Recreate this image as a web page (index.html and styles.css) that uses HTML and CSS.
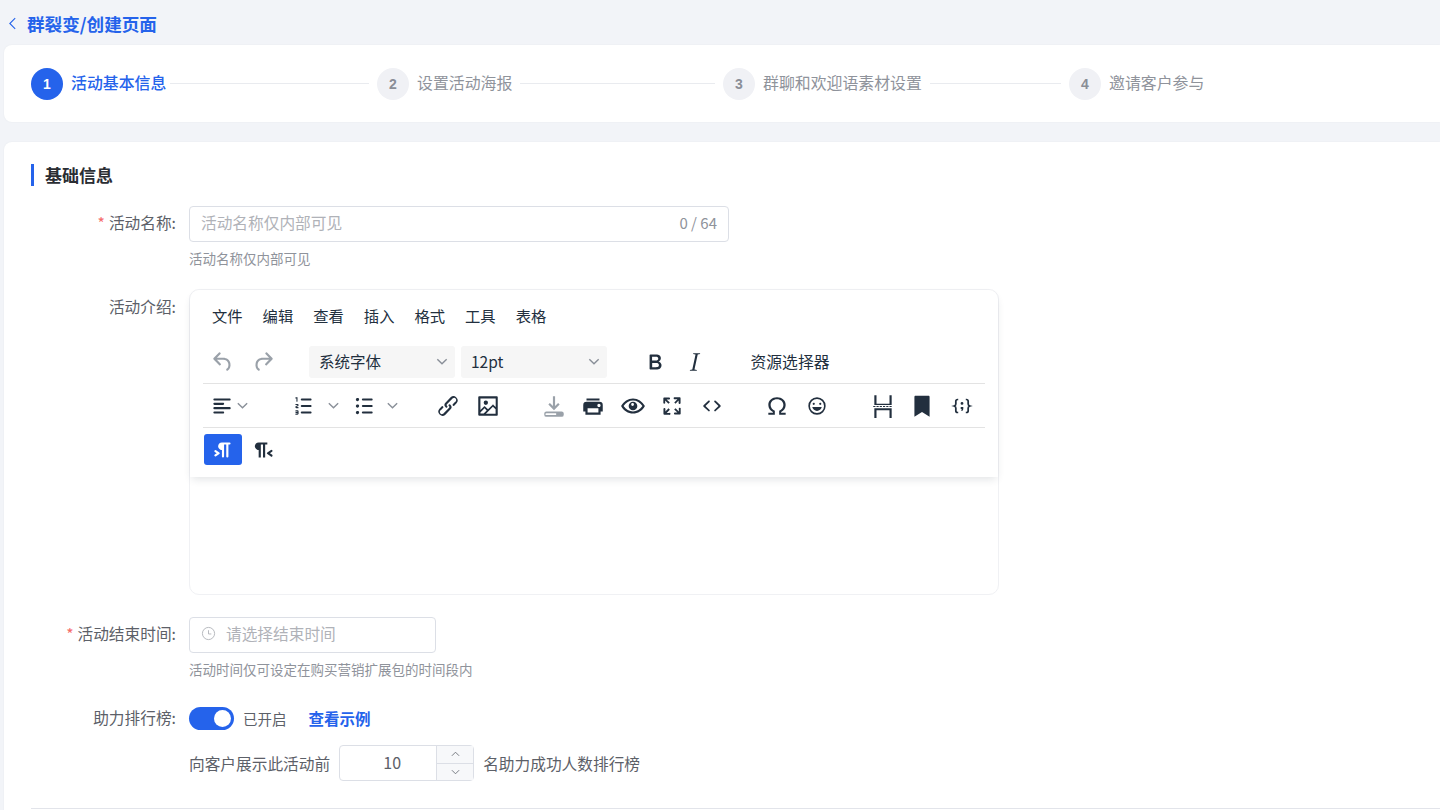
FILE: index.html
```html
<!DOCTYPE html>
<html lang="zh-CN">
<head>
    <meta charset="UTF-8">
    <meta name="viewport" content="width=device-width, initial-scale=1.0">
    <title>群裂变/创建页面</title>
    <link rel="stylesheet" href="styles.css">
</head>
<body>
    <!-- 页面标题 -->
    <div class="page-head">
        <svg class="back-icon" viewBox="0 0 10 16"><path d="M8 2 2 8l6 6"/></svg>
        <span class="page-title">群裂变/创建页面</span>
    </div>

    <!-- 步骤条 -->
    <div class="card steps">
        <div class="step active"><span class="step-num">1</span><span class="step-text">活动基本信息</span><span class="step-line"></span></div>
        <div class="step"><span class="step-num">2</span><span class="step-text">设置活动海报</span><span class="step-line"></span></div>
        <div class="step"><span class="step-num">3</span><span class="step-text">群聊和欢迎语素材设置</span><span class="step-line"></span></div>
        <div class="step"><span class="step-num">4</span><span class="step-text">邀请客户参与</span></div>
    </div>

    <div class="card form-card">
        <h2 class="section-title">基础信息</h2>

        <div class="form-row">
            <label class="form-label"><i>*</i>活动名称:</label>
            <div class="form-body">
                <div class="input name-input"><span class="placeholder">活动名称仅内部可见</span><span class="counter">0 / 64</span></div>
                <p class="hint">活动名称仅内部可见</p>
            </div>
        </div>

        <div class="form-row intro-row">
            <label class="form-label intro-label">活动介绍:</label>
            <div class="editor">
                <div class="editor-head">
                    <div class="menubar">
                        <span>文件</span><span>编辑</span><span>查看</span><span>插入</span><span>格式</span><span>工具</span><span>表格</span>
                    </div>
                    <div class="toolbar tb-first">
                        <div class="tb-group">
                            <span class="tb-btn disabled"><svg viewBox="0 0 24 24"><path d="M6.4 8H12c3.7 0 6.2 2 6.8 5.1.6 2.7-.4 5.6-2.3 6.8a1 1 0 0 1-1-1.8c1.1-.6 1.8-2.7 1.4-4.6-.5-2.1-2.1-3.5-4.9-3.5H6.4l3.3 3.3a1 1 0 1 1-1.4 1.4l-5-5a1 1 0 0 1 0-1.4l5-5a1 1 0 0 1 1.4 1.4L6.4 8Z"/></svg></span>
                            <span class="tb-btn disabled redo"><svg viewBox="0 0 24 24"><path d="M17.6 8H12c-3.7 0-6.2 2-6.8 5.1-.6 2.7.4 5.6 2.3 6.8a1 1 0 0 0 1-1.8c-1.1-.6-1.8-2.7-1.4-4.6.5-2.1 2.1-3.5 4.9-3.5h5.6l-3.3 3.3a1 1 0 1 0 1.4 1.4l5-5a1 1 0 0 0 0-1.4l-5-5a1 1 0 0 0-1.4 1.4L17.6 8Z"/></svg></span>
                        </div>
                        <div class="tb-select font-select"><span>系统字体</span><svg class="chev" viewBox="0 0 10 6"><path d="m1 1 4 4 4-4"/></svg></div>
                        <div class="tb-select size-select"><span>12pt</span><svg class="chev" viewBox="0 0 10 6"><path d="m1 1 4 4 4-4"/></svg></div>
                        <div class="tb-group bold-group">
                            <span class="tb-btn"><svg viewBox="0 0 24 24"><path d="M7.8 19c-.3 0-.5 0-.6-.2l-.2-.5V5.7c0-.2 0-.4.2-.5l.6-.2h5c1.5 0 2.7.3 3.5 1 .7.6 1.1 1.4 1.1 2.5a3 3 0 0 1-.6 1.9c-.4.6-1 1-1.6 1.2.4.1.9.3 1.3.6s.8.7 1 1.2c.4.4.5 1 .5 1.6 0 1.3-.4 2.3-1.3 3-.8.7-2.1 1-3.8 1H7.8Zm5-8.3c.6 0 1.2-.1 1.6-.5.4-.3.6-.7.6-1.3 0-1.1-.8-1.7-2.3-1.7H9.3v3.5h3.4Zm.5 6c.7 0 1.3-.1 1.7-.4.4-.4.6-.9.6-1.5s-.2-1-.7-1.4c-.4-.3-1-.4-2-.4H9.4v3.8h4Z"/></svg></span>
                            <span class="tb-btn"><svg viewBox="0 0 24 24"><path d="M16.7 4.7 14.5 5l-3 14 2.2.3V20H7.3v-.7l2.2-.3 3-14-2.2-.3V4h6.400z"/></svg></span>
                        </div>
                        <span class="tb-text">资源选择器</span>
                    </div>
                    <div class="toolbar tb-second">
                        <div class="tb-split align-split">
                            <span class="tb-btn"><svg viewBox="0 0 24 24"><path d="M5 5h14c.6 0 1 .4 1 1s-.4 1-1 1H5a1 1 0 1 1 0-2Zm0 4h8c.6 0 1 .4 1 1s-.4 1-1 1H5a1 1 0 1 1 0-2Zm0 8h8c.6 0 1 .4 1 1s-.4 1-1 1H5a1 1 0 0 1 0-2Zm0-4h14c.6 0 1 .4 1 1s-.4 1-1 1H5a1 1 0 0 1 0-2Z"/></svg></span>
                            <svg class="chev" viewBox="0 0 10 6"><path d="m1 1 4 4 4-4"/></svg>
                        </div>
                        <div class="tb-split ol-split">
                            <span class="tb-btn"><svg viewBox="0 0 24 24"><path d="M10 17h8c.6 0 1 .4 1 1s-.4 1-1 1h-8a1 1 0 0 1 0-2Zm0-6h8c.6 0 1 .4 1 1s-.4 1-1 1h-8a1 1 0 0 1 0-2Zm0-6h8c.6 0 1 .4 1 1s-.4 1-1 1h-8a1 1 0 1 1 0-2ZM6 4v3.5c0 .3-.2.5-.5.5a.5.5 0 0 1-.5-.5V5h-.5a.5.5 0 0 1 0-1H6Zm-1 8.8.2.2h1.3c.3 0 .5.2.5.5s-.2.5-.5.5H4.900a1 1 0 0 1-.9-1V13c0-.4.3-.8.6-1l1.2-.4.2-.3a.2.2 0 0 0-.2-.2H4.500a.5.5 0 0 1-.5-.5c0-.3.2-.5.5-.5h1.6c.5 0 .9.4.9 1v.1c0 .4-.3.8-.6 1l-1.2.4-.2.3ZM7 17v2c0 .6-.4 1-1 1H4.500a.5.5 0 0 1 0-1h1.2c.2 0 .3-.1.3-.3 0-.2-.1-.3-.3-.3H4.400a.4.4 0 1 1 0-.8h1.3c.2 0 .3-.1.3-.3 0-.2-.1-.3-.3-.3H4.500a.5.5 0 1 1 0-1H6c.6 0 1 .4 1 1Z"/></svg></span>
                            <svg class="chev" viewBox="0 0 10 6"><path d="m1 1 4 4 4-4"/></svg>
                        </div>
                        <div class="tb-split ul-split">
                            <span class="tb-btn"><svg viewBox="0 0 24 24"><path d="M11 5h8c.6 0 1 .4 1 1s-.4 1-1 1h-8a1 1 0 0 1 0-2Zm0 6h8c.6 0 1 .4 1 1s-.4 1-1 1h-8a1 1 0 0 1 0-2Zm0 6h8c.6 0 1 .4 1 1s-.4 1-1 1h-8a1 1 0 0 1 0-2ZM4.500 6c0-.4.1-.8.4-1 .3-.4.7-.5 1.1-.5.4 0 .8.1 1 .4.4.3.5.7.5 1.1 0 .4-.1.8-.4 1-.3.4-.7.5-1.1.5-.4 0-.8-.1-1-.4-.4-.3-.5-.7-.5-1.100Zm0 6c0-.4.1-.8.4-1 .3-.4.7-.5 1.1-.5.4 0 .8.1 1 .4.4.3.5.7.5 1.1 0 .4-.1.8-.4 1-.3.4-.7.5-1.1.5-.4 0-.8-.1-1-.4-.4-.3-.5-.7-.5-1.100Zm0 6c0-.4.1-.8.4-1 .3-.4.7-.5 1.1-.5.4 0 .8.1 1 .4.4.3.5.7.5 1.1 0 .4-.1.8-.4 1-.3.4-.7.5-1.1.5-.4 0-.8-.1-1-.4-.4-.3-.5-.7-.5-1.100Z"/></svg></span>
                            <svg class="chev" viewBox="0 0 10 6"><path d="m1 1 4 4 4-4"/></svg>
                        </div>
                        <div class="tb-group link-group">
                            <span class="tb-btn"><svg viewBox="0 0 24 24"><path d="M6.2 12.3a1 1 0 0 1 1.4 1.4l-2 2a2 2 0 1 0 2.6 2.8l4.8-4.8a1 1 0 0 0 0-1.4 1 1 0 1 1 1.4-1.3 2.9 2.9 0 0 1 0 4L9.6 20a3.9 3.9 0 0 1-5.5-5.5l2-2Zm11.600-.6a1 1 0 0 1-1.400-1.400l2-2a2 2 0 1 0-2.600-2.800L11 10.300a1 1 0 0 0 0 1.400A1 1 0 1 1 9.600 13a2.900 2.900 0 0 1 0-4L14.400 4a3.900 3.900 0 0 1 5.500 5.500l-2 2Z"/></svg></span>
                            <span class="tb-btn"><svg viewBox="0 0 24 24"><path d="m5 15.7 3.3-3.2c.3-.3.7-.3 1 0L12 15l4.100-4c.3-.4.8-.4 1 0l2 1.900V5H5v10.700ZM5 18v1h3l2.800-2.900-2-2L5 17.900Zm14-3-2.500-2.400-6.400 6.500H19v-4ZM4 3h16c.6 0 1 .4 1 1v16c0 .6-.4 1-1 1H4a1 1 0 0 1-1-1V4c0-.6.4-1 1-1Zm6 8a2 2 0 1 0 0-4 2 2 0 0 0 0 4Z"/></svg></span>
                        </div>
                        <div class="tb-group tools-group">
                            <span class="tb-btn disabled"><svg viewBox="0 0 24 24"><path d="M11 3h2v9l2.800-2.800 1.400 1.400L12 16l-5.200-5.400 1.400-1.400L11 12V3Z"/><path fill-rule="evenodd" d="M5 17h14a2 2 0 0 1 2 2v1a2 2 0 0 1-2 2H5a2 2 0 0 1-2-2v-1a2 2 0 0 1 2-2Zm0 1.600a.8.8 0 0 0 0 1.800h9v-1.800H5Z"/></svg></span>
                            <span class="tb-btn"><svg viewBox="0 0 24 24"><path d="M18 8H6a3 3 0 0 0-3 3v6h2v3h14v-3h2v-6a3 3 0 0 0-3-3Zm-1 10H7v-4h10v4Zm.5-5c-.8 0-1.500-.7-1.500-1.500s.7-1.500 1.500-1.500 1.500.7 1.500 1.500-.7 1.500-1.500 1.500Zm.5-8H6v2h12V5Z"/></svg></span>
                            <span class="tb-btn"><svg viewBox="0 0 24 24"><path fill-rule="evenodd" d="M12 5c4.500 0 8.700 2.700 11 7-2.300 4.300-6.500 7-11 7S3.300 16.300 1 12c2.300-4.300 6.500-7 11-7Zm0 2c-3.400 0-6.600 1.900-8.700 5 2.100 3.100 5.300 5 8.700 5s6.600-1.900 8.700-5c-2.100-3.100-5.300-5-8.700-5Zm0 1a4 4 0 1 1 0 8 4 4 0 0 1 0-8Zm-.4 1.300a1.300 1.300 0 1 0 0 2.600 1.300 1.300 0 0 0 0-2.600Z"/></svg></span>
                            <span class="tb-btn"><svg viewBox="0 0 24 24"><path d="m15.300 10-1.200-1.300 2.900-3h-2.300a.9.9 0 1 1 0-1.700H19c.5 0 .9.4.9.9v4.400a.9.9 0 1 1-1.800 0V7l-2.900 3Zm0 4 3 3v-2.300a.9.900 0 1 1 1.700 0V19c0 .5-.4.9-.9.9h-4.400a.9.900 0 1 1 0-1.800H17l-3-2.900 1.300-1.200ZM10 15.400l-2.900 3h2.300a.9.900 0 1 1 0 1.700H5a.9.900 0 0 1-.9-.9v-4.400a.9.900 0 1 1 1.800 0V17l2.900-3 1.200 1.400ZM8.700 10l-3-3v2.300a.9.900 0 0 1-1.700 0V5c0-.5.4-.9.9-.9h4.400a.9.900 0 0 1 0 1.800H7l3 2.900-1.300 1.200Z"/></svg></span>
                            <span class="tb-btn"><svg viewBox="0 0 24 24"><path d="M9.800 15.700c.3.300.3.800 0 1-.3.400-.9.400-1.200 0l-4.400-4.100a.8.8 0 0 1 0-1.200l4.400-4.200c.3-.3.900-.3 1.200 0 .3.300.3.800 0 1.100L6 12l3.800 3.700ZM14.200 15.700c-.3.300-.3.800 0 1 .4.400.9.400 1.200 0l4.400-4.100c.3-.3.300-.9 0-1.200l-4.400-4.200a.8.8 0 0 0-1.200 0c-.3.300-.3.800 0 1.100L18 12l-3.800 3.700Z"/></svg></span>
                        </div>
                        <div class="tb-group char-group">
                            <span class="tb-btn"><svg viewBox="0 0 24 24"><path d="M4 20v-1.800h4.200v-.7C5.700 16.300 4 13.800 4 11c0-4.100 3.400-7 8-7s8 2.900 8 7c0 2.800-1.700 5.300-4.200 6.500v.7H20V20h-6v-3.700c2.300-.8 3.900-2.900 3.900-5.300 0-3-2.500-5.200-5.900-5.200S6.100 8 6.100 11c0 2.400 1.600 4.500 3.900 5.300V20H4Z"/></svg></span>
                            <span class="tb-btn"><svg viewBox="0 0 24 24"><path d="M9 11c.6 0 1-.4 1-1s-.4-1-1-1a1 1 0 0 0-1 1c0 .6.4 1 1 1Zm6 0c.6 0 1-.4 1-1s-.4-1-1-1a1 1 0 0 0-1 1c0 .6.4 1 1 1Zm-3 5.500c2.100 0 4-1.500 4.400-3.500H7.600c.5 2 2.300 3.500 4.400 3.500ZM12 4a8 8 0 1 0 0 16 8 8 0 0 0 0-16Zm0 14.500a6.500 6.500 0 1 1 0-13 6.500 6.500 0 0 1 0 13Z"/></svg></span>
                        </div>
                        <div class="tb-group break-group">
                            <span class="tb-btn"><svg viewBox="0 0 24 24"><path d="M4 2h2v8h12V2h2v9H4V2Zm0 21h2v-7h12v7h2v-9H4v9Z"/><path d="M3 12h2v1H3zm3 0h2v1H6zm3 0h2v1H9zm3 0h2v1h-2zm3 0h2v1h-2zm3 0h2v1h-2z"/></svg></span>
                            <span class="tb-btn"><svg viewBox="0 0 24 24"><path d="M5 3.500c0-.6.4-1 1-1h12c.6 0 1 .4 1 1V22l-7-4.500L5 22V3.500Z"/></svg></span>
                            <span class="tb-btn"><svg viewBox="0 0 24 24"><path class="brace" d="M8.500 6H8c-1 0-1.700.6-1.700 1.700v2.400c0 1-.5 1.600-1.500 1.900 1 .3 1.500.9 1.500 1.900v2.400c0 1.100.7 1.700 1.700 1.700h.5M15.500 6h.5c1 0 1.700.6 1.700 1.700v2.400c0 1 .5 1.600 1.500 1.900-1 .3-1.500.9-1.500 1.900v2.400c0 1.100-.7 1.700-1.700 1.700h-.5"/><path d="M12 8.300a1.300 1.300 0 1 1 0 2.600 1.300 1.300 0 0 1 0-2.600Zm-1.200 4.700h2.400v1.500c0 1.100-.5 1.800-1.500 2.100l-.5-.9c.4-.2.600-.5.700-.9h-1.100V13Z"/></svg></span>
                        </div>
                    </div>
                    <div class="toolbar tb-third">
                        <span class="tb-btn on"><svg viewBox="0 0 24 24"><path d="M11 5h7a1 1 0 0 1 0 2h-1v11a1 1 0 0 1-2 0V7h-2v11a1 1 0 0 1-2 0v-6c-.5 0-1 0-1.400-.3A3.400 3.400 0 0 1 7.800 10a3.300 3.300 0 0 1 0-2.800 3.400 3.400 0 0 1 1.800-1.800L11 5ZM4.400 16.200 6.200 15l-1.800-1.200a1 1 0 0 1 1.200-1.600l3 2a1 1 0 0 1 0 1.600l-3 2a1 1 0 1 1-1.200-1.600Z"/></svg></span>
                        <span class="tb-btn rtl"><svg viewBox="0 0 24 24"><path d="M8 5h8v2h-2v12h-2V7h-2v12H8v-7c-.5 0-1 0-1.400-.3A3.400 3.400 0 0 1 4.800 10a3.300 3.300 0 0 1 0-2.800 3.400 3.400 0 0 1 1.800-1.800L8 5Zm12 11.200a1 1 0 1 1-1 1.600l-3-2a1 1 0 0 1 0-1.600l3-2a1 1 0 1 1 1 1.600L18.400 15l1.800 1.200Z"/></svg></span>
                    </div>
                </div>
            </div>
        </div>

        <div class="form-row end-row">
            <label class="form-label"><i>*</i>活动结束时间:</label>
            <div class="form-body">
                <div class="input time-input">
                    <svg class="clock" viewBox="0 0 16 16"><circle cx="8" cy="8" r="6.500"/><path d="M8 4.500V8.500h3"/></svg>
                    <span class="placeholder">请选择结束时间</span>
                </div>
                <p class="hint">活动时间仅可设定在购买营销扩展包的时间段内</p>
            </div>
        </div>

        <div class="form-row rank-row">
            <label class="form-label">助力排行榜:</label>
            <div class="form-body">
                <div class="switch-line">
                    <span class="switch"><span class="switch-dot"></span></span>
                    <span class="switch-text">已开启</span>
                    <a class="link">查看示例</a>
                </div>
                <div class="number-line">
                    <span>向客户展示此活动前</span>
                    <div class="number-input">
                        <span class="number-value">10</span>
                        <div class="number-arrows">
                            <span><svg viewBox="0 0 10 6"><path d="m1 5 4-4 4 4"/></svg></span>
                            <span><svg viewBox="0 0 10 6"><path d="m1 1 4 4 4-4"/></svg></span>
                        </div>
                    </div>
                    <span>名助力成功人数排行榜</span>
                </div>
            </div>
        </div>

        <div class="divider"></div>
    </div>
</body>
</html>
```

FILE: styles.css
```css
* {
    box-sizing: border-box;
}
html, body {
    height: 810px;
    overflow: hidden;
}
body {
    margin: 0;
    padding-left: 4px;
    background-color: #f2f4f8;
    font-family: "Noto Sans CJK SC", "Noto Sans", sans-serif;
    font-size: 15.7px;
    color: #5c6068;
}
.page-head {
    height: 45px;
    margin-left: -4px;
    padding: 2px 0 0 8px;
    display: flex;
    align-items: center;
}
.back-icon {
    width: 9px;
    height: 15px;
    fill: none;
    stroke: #2563eb;
    stroke-width: 1.2;
}
.page-title {
    margin-left: 10px;
    font-size: 17.6px;
    font-weight: 700;
    color: #2563eb;
}
.card {
    background: white;
    border-radius: 8px 0 0 8px;
    box-shadow: 0 0 2px rgba(20,30,60,0.05);
}

/* 步骤条 */
.steps {
    height: 77px;
    padding: 0 25px 0 27px;
    display: grid;
    grid-template-columns: repeat(4, 346px);
    align-items: center;
}
.step {
    display: flex;
    align-items: center;
    color: #8f939b;
}
.step-num {
    width: 32px;
    height: 32px;
    flex: none;
    border-radius: 50%;
    background: #f0f1f5;
    color: #8a8e97;
    font-family: "Liberation Sans", sans-serif;
    font-weight: 700;
    font-size: 14px;
    display: flex;
    align-items: center;
    justify-content: center;
}
.step-text {
    margin-left: 8px;
    padding-bottom: 2px;
    font-size: 15.9px;
    white-space: nowrap;
}
.step-line {
    flex: 1;
    height: 1px;
    margin: 0 8px;
    background: #e9ebef;
}
.step.active .step-num {
    background: #2563eb;
    color: white;
}
.step.active .step-text {
    color: #2563eb;
    font-weight: 500;
}
.step.active .step-line {
    margin-left: 4px;
}

/* 表单 */
.form-card {
    margin-top: 20px;
    padding: 22px 0 0 27px;
    height: 700px;
}
.section-title {
    margin: 0;
    height: 22px;
    padding-left: 11px;
    border-left: 3px solid #2563eb;
    font-size: 17px;
    line-height: 21px;
    font-weight: 700;
    color: #2a2d33;
}
.form-row {
    display: flex;
    margin-top: 20px;
}
.form-label {
    width: 145px;
    flex: none;
    margin-right: 13px;
    height: 36px;
    line-height: 33px;
    text-align: right;
    white-space: nowrap;
}
.form-label i {
    color: #f56c6c;
    font-style: normal;
    margin-right: 4px;
}
.input {
    height: 36px;
    padding: 0 11px 3px;
    border: 1px solid #dcdfe6;
    border-radius: 4px;
    background: white;
    display: flex;
    align-items: center;
}
.name-input {
    width: 540px;
    justify-content: space-between;
}
.placeholder {
    color: #b0b2b8;
}
.counter {
    color: #8f939b;
    font-size: 15px;
}
.hint {
    margin: 6px 0 0;
    padding-bottom: 1px;
    font-size: 13.5px;
    line-height: 20px;
    color: #8f939b;
}

/* 编辑器 */
.intro-row {
    margin-top: 20px;
}
.intro-label {
    line-height: 36px;
}
.editor {
    width: 810px;
    height: 306px;
    border: 1px solid #f0f1f4;
    border-radius: 10px;
}
.editor-head {
    height: 187px;
    padding: 0 13px;
    border-radius: 10px 10px 0 0;
    background: white;
    box-shadow: 0 4px 8px -2px rgba(34,47,62,0.14);
}
.menubar {
    height: 51px;
    padding: 0 0 1px 9px;
    display: flex;
    align-items: center;
    gap: 20px;
    font-size: 15.3px;
    color: #222f3e;
}
.toolbar {
    display: flex;
    align-items: center;
}
.tb-first {
    height: 43px;
    padding: 5px 0 5px 1px;
    border-bottom: 1px solid #e3e3e3;
}
.tb-second {
    height: 44px;
    padding-left: 1px;
    border-bottom: 1px solid #e3e3e3;
}
.tb-third {
    height: 48px;
    padding: 6px 0 0 1px;
    align-items: flex-start;
}
.tb-group {
    display: flex;
    gap: 1.5px;
}
.tb-btn {
    width: 38px;
    height: 31px;
    flex: none;
    border-radius: 3px;
    display: flex;
    align-items: center;
    justify-content: center;
}
.tb-btn svg {
    width: 26px;
    height: 26px;
    fill: #222f3e;
}
.tb-btn .brace {
    fill: none;
    stroke: #222f3e;
    stroke-width: 1.6;
}
.tb-btn.disabled svg {
    fill: #9aa1a9;
}
.tb-btn.on {
    background: #2563eb;
}
.tb-btn.on svg {
    fill: white;
}
.rtl {
    margin-left: 2px;
}
.redo {
    margin-left: 0.5px;
}
.chev {
    width: 12px;
    height: 7px;
    flex: none;
    fill: none;
    stroke: #8a9099;
    stroke-width: 1.2;
}
.tb-select {
    width: 146px;
    height: 32px;
    margin-left: 6px;
    padding: 0 7px 2px 10px;
    border-radius: 3px;
    background: #f6f6f6;
    display: flex;
    align-items: center;
    justify-content: space-between;
    font-size: 15.5px;
    color: #222f3e;
}
.font-select {
    margin-left: 27px;
}
.bold-group {
    margin-left: 29px;
}
.tb-text {
    margin-left: 37px;
    padding-bottom: 2px;
    font-size: 15.8px;
    color: #222f3e;
}
.tb-split {
    display: flex;
    align-items: center;
}
.align-split {
    width: 81px;
    margin-left: -1px;
    padding-right: 0;
}
.ol-split {
    width: 60px;
    margin-left: 1px;
}
.ul-split {
    width: 84px;
}
.align-split .chev {
    width: 13px;
    margin-left: -5px;
}
.ol-split .chev {
    width: 13px;
    margin-left: 4px;
}
.ul-split .chev {
    width: 13px;
    margin-left: 3px;
}
.tools-group {
    margin-left: 28px;
}
.char-group {
    margin-left: 27px;
    gap: 2px;
}
.break-group {
    margin-left: 28px;
}

.end-row {
    margin-top: 22px;
}
.time-input {
    width: 247px;
    gap: 10px;
}
.clock {
    width: 15px;
    height: 15px;
    flex: none;
    fill: none;
    stroke: #b3b5bb;
    stroke-width: 1;
}

/* 排行榜 */
.rank-row {
    margin-top: 27px;
}
.rank-row .form-label {
    height: 23px;
    line-height: 22px;
}
.switch-line {
    height: 23px;
    display: flex;
    align-items: center;
}
.switch {
    width: 45px;
    height: 23px;
    padding: 3px;
    border-radius: 12px;
    background: #2563eb;
    display: flex;
    justify-content: flex-end;
}
.switch-dot {
    width: 17px;
    height: 17px;
    border-radius: 50%;
    background: white;
}
.switch-text {
    margin-left: 9px;
    padding-bottom: 1px;
    font-size: 14.5px;
}
.link {
    margin-left: 22px;
    padding-bottom: 2px;
    color: #2563eb;
    font-size: 15.5px;
    font-weight: 700;
}
.number-line {
    margin-top: 15px;
    display: flex;
    align-items: center;
}
.number-input {
    width: 135px;
    height: 36px;
    margin: 0 9px;
    border: 1px solid #dcdfe6;
    border-radius: 4px;
    display: flex;
}
.number-value {
    flex: 1;
    padding-left: 8px;
    text-align: center;
    line-height: 32px;
    font-size: 16px;
}
.number-arrows {
    width: 37px;
    border-left: 1px solid #dcdfe6;
    display: flex;
    flex-direction: column;
}
.number-arrows span {
    flex: 1;
    background: #f7f8fa;
    display: flex;
    align-items: center;
    justify-content: center;
}
.number-arrows span + span {
    border-top: 1px solid #dcdfe6;
}
.number-arrows svg {
    width: 9px;
    height: 6px;
    fill: none;
    stroke: #6b6f77;
    stroke-width: 1;
}
.divider {
    height: 1px;
    margin-top: 27px;
    background: #e2e4ea;
}
```
